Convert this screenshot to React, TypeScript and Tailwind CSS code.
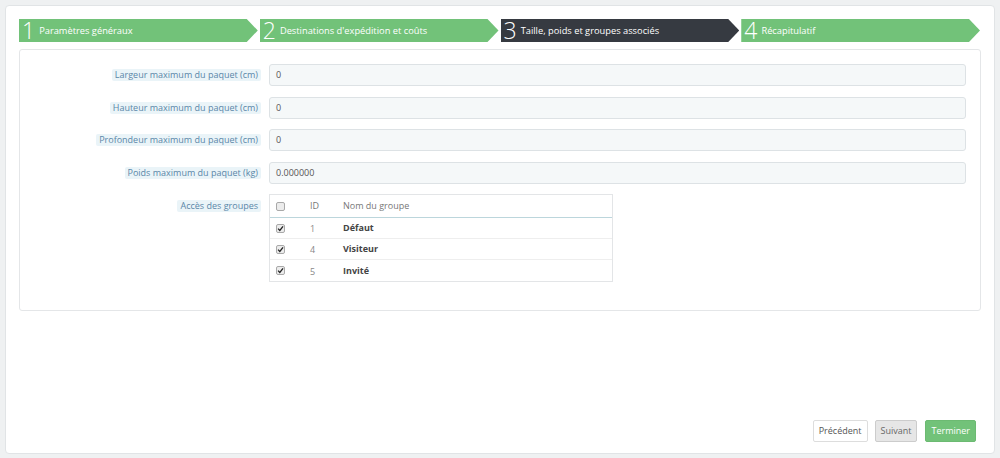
import React from "react";

const steps = [
  { n: "1", label: "Paramètres généraux", active: false },
  { n: "2", label: "Destinations d'expédition et coûts", active: false },
  { n: "3", label: "Taille, poids et groupes associés", active: true },
  { n: "4", label: "Récapitulatif", active: false },
];

const fields = [
  { label: "Largeur maximum du paquet (cm)", value: "0" },
  { label: "Hauteur maximum du paquet (cm)", value: "0" },
  { label: "Profondeur maximum du paquet (cm)", value: "0" },
  { label: "Poids maximum du paquet (kg)", value: "0.000000" },
];

const groups = [
  { id: 1, name: "Défaut" },
  { id: 4, name: "Visiteur" },
  { id: 5, name: "Invité" },
];

function Check({ checked }: { checked: boolean }) {
  return (
    <span className="flex h-[9px] w-[9px] items-center justify-center rounded-[2px] border border-[#a9a9a9] bg-[#ececec]">
      {checked && (
        <svg viewBox="0 0 10 10" className="h-[7px] w-[7px]">
          <path d="M1.5 5.2 L4 7.8 L8.6 1.8" fill="none" stroke="#222" strokeWidth="1.8" />
        </svg>
      )}
    </span>
  );
}

function Label({ children }: { children: React.ReactNode }) {
  return (
    <span className="rounded-[2px] bg-[#eaf4f8] px-[3px] text-[9px] leading-[12px] text-[#5a87a8]">
      {children}
    </span>
  );
}

export default function App() {
  return (
    <div
      className="h-[458px] w-full bg-[#eff1f2] px-[5px] pt-[5px] pb-[4px]"
      style={{ fontFamily: '"Open Sans", "Liberation Sans", sans-serif' }}
    >
      <div className="flex h-full flex-col rounded-[4px] border border-[#e1e4e6] bg-white px-[13px] pt-[13px] pb-[11px]">
        {/* wizard steps */}
        <div className="flex h-[23px] gap-[2px] pr-[1px]">
          {steps.map((s) => (
            <div
              key={s.n}
              className={`flex flex-1 items-center gap-[4px] pl-[3px] text-white ${
                s.active ? "bg-[#363a41]" : "bg-[#72c279]"
              }`}
              style={{ clipPath: "polygon(0 0, calc(100% - 11px) 0, 100% 50%, calc(100% - 11px) 100%, 0 100%)" }}
            >
              <span className="text-[23px] font-light leading-[23px]">{s.n}</span>
              <span className="pt-[1px] text-[9.3px] leading-none">{s.label}</span>
            </div>
          ))}
        </div>

        {/* form panel */}
        <div className="mt-[7px] rounded-[3px] border border-[#e4e6e8] bg-white pt-[14px] pr-[14px] pb-[28px]">
          <div className="flex flex-col gap-[10.5px]">
            {fields.map((f) => (
              <div key={f.label} className="flex items-center">
                <div className="flex w-[241px] justify-end">
                  <Label>{f.label}</Label>
                </div>
                <div className="ml-[8px] flex h-[22px] flex-1 items-center rounded-[3px] border border-[#dde2e5] bg-[#f5f8f9] px-[6px] text-[9px] text-[#555]">
                  {f.value}
                </div>
              </div>
            ))}

            <div className="flex items-start">
              <div className="flex w-[241px] justify-end pt-[6px]">
                <Label>Accès des groupes</Label>
              </div>
              <div className="ml-[8px] w-[344px] border border-[#e3e5e7] text-[9px]">
                <div className="flex h-[23px] items-center border-b border-[#bcd6dc] text-[#777]">
                  <div className="w-[32px] pl-[6px]">
                    <Check checked={false} />
                  </div>
                  <div className="w-[41px] pl-[8px]">ID</div>
                  <div>Nom du groupe</div>
                </div>
                {groups.map((g, i) => (
                  <div
                    key={g.id}
                    className={`flex h-[21px] items-center ${i < groups.length - 1 ? "border-b border-[#eeeeee]" : ""}`}
                  >
                    <div className="w-[32px] pl-[6px]">
                      <Check checked />
                    </div>
                    <div className="w-[41px] pl-[8px] pt-[2px] text-[#888]">{g.id}</div>
                    <div className="font-bold text-[#444]">{g.name}</div>
                  </div>
                ))}
              </div>
            </div>
          </div>
        </div>

        <div className="flex-1" />

        {/* footer buttons */}
        <div className="flex justify-end gap-[7px] pr-[5px]">
          <button className="h-[22px] rounded-[2px] border border-[#dddddd] bg-white px-[5px] text-[9px] text-[#555]">
            Précédent
          </button>
          <button className="h-[22px] rounded-[2px] border border-[#cccccc] bg-[#e6e6e6] px-[5px] text-[9px] text-[#666]">
            Suivant
          </button>
          <button className="ml-[1px] h-[22px] rounded-[2px] border border-[#6cba72] bg-[#72c279] px-[5px] text-[9px] text-white">
            Terminer
          </button>
        </div>
      </div>
    </div>
  );
}
